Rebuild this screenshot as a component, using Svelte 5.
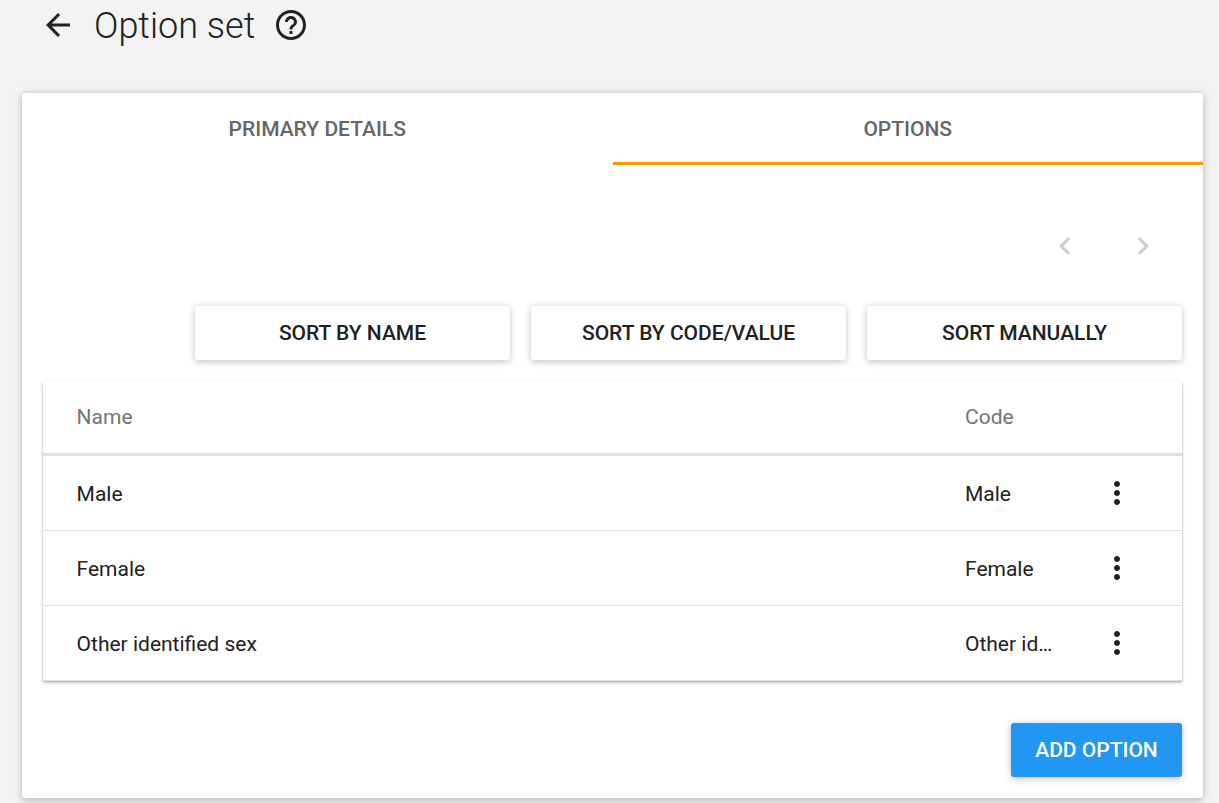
<script>
  const sorts = ['Sort by name', 'Sort by code/value', 'Sort manually'];
  const options = [
    { name: 'Male', code: 'Male' },
    { name: 'Female', code: 'Female' },
    { name: 'Other identified sex', code: 'Other id…' }
  ];
</script>

<div class="page">
  <header>
    <button class="icon" aria-label="Back">
      <svg viewBox="0 0 24 24"><path d="M20 11H7.83l5.59-5.59L12 4l-8 8 8 8 1.41-1.41L7.83 13H20v-2z" /></svg>
    </button>
    <h1>Option set</h1>
    <button class="icon" aria-label="Help">
      <svg viewBox="0 0 24 24"><path d="M11 18h2v-2h-2v2zm1-16C6.48 2 2 6.48 2 12s4.48 10 10 10 10-4.48 10-10S17.52 2 12 2zm0 18c-4.41 0-8-3.59-8-8s3.59-8 8-8 8 3.59 8 8-3.59 8-8 8zm0-14c-2.21 0-4 1.79-4 4h2c0-1.1.9-2 2-2s2 .9 2 2c0 2-3 1.75-3 5h2c0-2.25 3-2.5 3-5 0-2.21-1.79-4-4-4z" /></svg>
    </button>
  </header>

  <main>
    <nav class="tabs">
      <button>Primary details</button>
      <button class="active">Options</button>
    </nav>

    <div class="pager">
      <button class="icon" disabled aria-label="Previous page">
        <svg viewBox="0 0 24 24"><path d="M15.41 7.41L14 6l-6 6 6 6 1.41-1.41L10.83 12z" /></svg>
      </button>
      <button class="icon" disabled aria-label="Next page">
        <svg viewBox="0 0 24 24"><path d="M10 6L8.59 7.41 13.17 12l-4.58 4.59L10 18l6-6z" /></svg>
      </button>
    </div>

    <div class="sorts">
      {#each sorts as label}
        <button class="raised">{label}</button>
      {/each}
    </div>

    <div class="table">
      <div class="row head"><span>Name</span><span>Code</span></div>
      {#each options as option}
        <div class="row">
          <span>{option.name}</span>
          <span>{option.code}</span>
          <button class="icon" aria-label="Actions">
            <svg viewBox="0 0 24 24"><path d="M12 8c1.1 0 2-.9 2-2s-.9-2-2-2-2 .9-2 2 .9 2 2 2zm0 2c-1.1 0-2 .9-2 2s.9 2 2 2 2-.9 2-2-.9-2-2-2zm0 6c-1.1 0-2 .9-2 2s.9 2 2 2 2-.9 2-2-.9-2-2-2z" /></svg>
          </button>
        </div>
      {/each}
    </div>

    <div class="footer"><button class="raised primary">Add option</button></div>
  </main>
</div>

<style>
  :global(body) {
    background: #f3f3f3;
  }
  .page {
    box-sizing: border-box;
    height: 803px;
    overflow: hidden;
    padding: 7px 16px 5px 22px;
    font-family: Roboto, sans-serif;
    color: #212121;
  }
  button {
    margin: 0;
    padding: 0;
    border: 0;
    background: none;
    font: inherit;
    color: inherit;
  }
  .icon {
    display: block;
    width: 36px;
    height: 36px;
  }
  svg {
    display: block;
    width: 36px;
    height: 36px;
    fill: currentColor;
  }
  header {
    display: flex;
    height: 36px;
    padding-left: 18px;
    margin-bottom: 50px;
  }
  h1 {
    width: 179px;
    margin: 0 0 0 18px;
    font-size: 36px;
    font-weight: 300;
    line-height: 39px;
    white-space: nowrap;
  }
  main {
    box-sizing: border-box;
    height: 705px;
    border-radius: 3px;
    background: #fff;
    box-shadow: 0 1.5px 9px rgba(0, 0, 0, 0.16), 0 1.5px 6px rgba(0, 0, 0, 0.12);
  }
  .tabs {
    display: flex;
    height: 72px;
  }
  .tabs button {
    flex: 1;
    padding-top: 3px;
    border-bottom: 3px solid transparent;
    font-size: 21px;
    font-weight: 500;
    line-height: 66px;
    text-transform: uppercase;
    color: #666;
  }
  .tabs .active {
    border-color: #ff9800;
  }
  .pager {
    display: flex;
    justify-content: flex-end;
    gap: 42px;
    padding: 63px 42px 42px 0;
    color: #ccc;
  }
  .sorts {
    display: grid;
    grid-template-columns: repeat(3, 315px);
    justify-content: end;
    gap: 21px;
    padding: 0 21px;
  }
  .raised {
    height: 54px;
    border-radius: 3px;
    background: #fff;
    font-size: 21px;
    font-weight: 500;
    line-height: 54px;
    text-transform: uppercase;
    box-shadow: 0 1.5px 9px rgba(0, 0, 0, 0.12), 0 1.5px 6px rgba(0, 0, 0, 0.12);
  }
  .table {
    margin: 21px 21px 0;
    box-shadow: 0 1.5px 3px rgba(0, 0, 0, 0.3), 0 0 1.5px rgba(0, 0, 0, 0.12);
  }
  .row {
    display: grid;
    grid-template-columns: 888.4px 89.6px 36px;
    align-items: center;
    box-sizing: border-box;
    height: 75px;
    padding-left: 33.6px;
    border-bottom: 1px solid #e0e0e0;
    background: #fff;
    font-size: 21px;
    line-height: 28px;
  }
  .row span {
    padding-top: 1px;
    white-space: nowrap;
  }
  .row.head {
    border-bottom-width: 3px;
    color: #757575;
  }
  .row.head span {
    padding: 0 0 1px;
  }
  .row .icon {
    margin-left: 44px;
  }
  .footer {
    display: flex;
    justify-content: flex-end;
    padding: 42px 21px 0;
  }
  .primary {
    width: 171px;
    background: #2196f3;
    color: #fff;
  }
</style>
